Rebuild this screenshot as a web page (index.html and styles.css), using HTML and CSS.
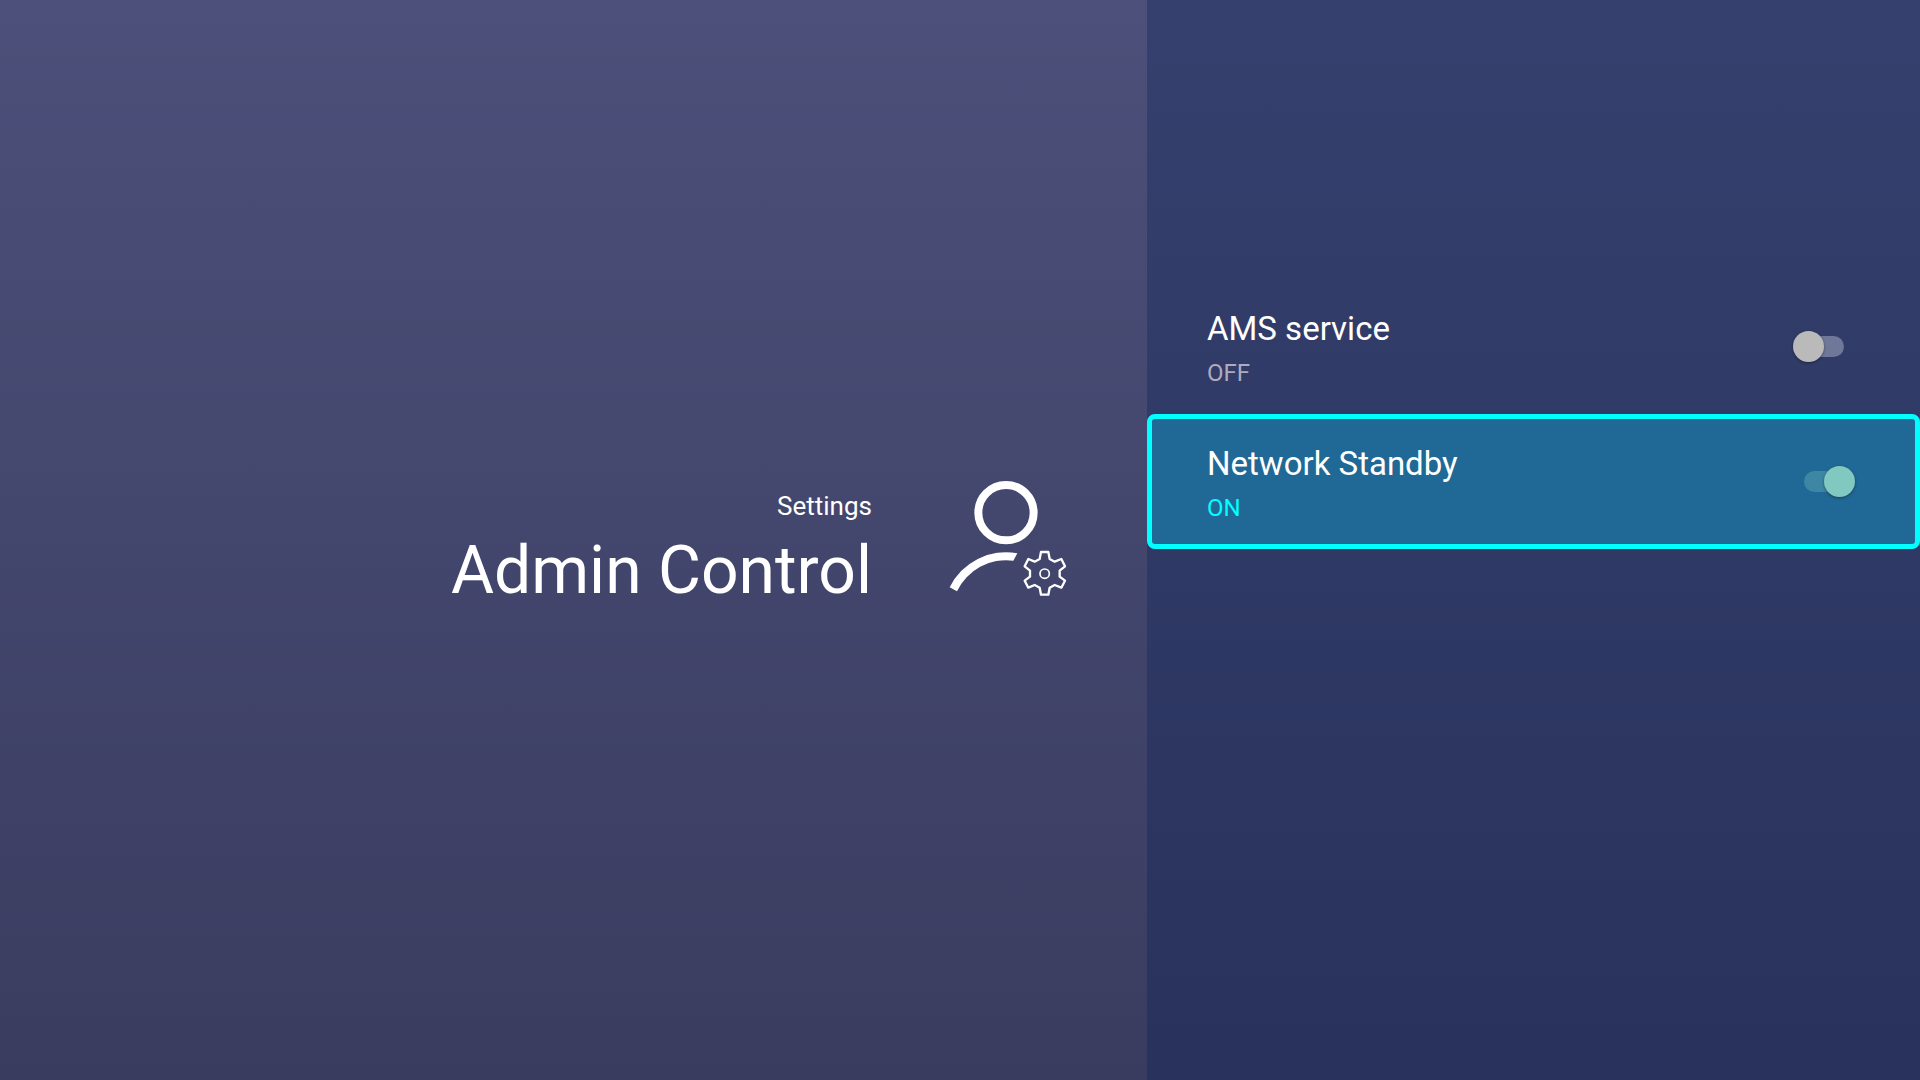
FILE: index.html
```html
<!DOCTYPE html>
<html lang="en">
<head>
  <meta charset="UTF-8" />
  <meta name="viewport" content="width=device-width, initial-scale=1.0"/>
  <title>Admin Control</title>
  <link rel="stylesheet" href="styles.css">
</head>
<body>
  <header class="title-panel">
    <div class="titles">
      <p class="breadcrumb">Settings</p>
      <h1>Admin Control</h1>
    </div>
    <!-- Admin Icon -->
    <svg class="admin-icon" viewBox="48 48 384 384" fill="none" aria-hidden="true">
      <circle cx="228" cy="158" r="83" stroke="white" stroke-width="24"/>
      <path d="M59 382A187 187 0 0 1 262 280L250 302A163 163 0 0 0 81 394Z" fill="white"/>
      <path d="M333 276H355L359 297L374 305L394 297L405 319L389 332V350L405 362L394 383L374 375L359 383L355 404H333L329 383L314 375L295 383L284 362L300 350V332L284 319L295 297L314 305L329 297Z" stroke="white" stroke-width="7" stroke-linejoin="round"/>
      <circle cx="344" cy="341" r="14" stroke="white" stroke-width="5"/>
    </svg>
  </header>

  <main class="options-panel">
    <label class="option" for="ams-service">
      <span class="option-text">
        <span class="option-name">AMS service</span>
        <span class="option-state">OFF</span>
      </span>
      <input class="switch" type="checkbox" role="switch" id="ams-service">
    </label>
    <label class="option selected" for="network-standby">
      <span class="option-text">
        <span class="option-name">Network Standby</span>
        <span class="option-state">ON</span>
      </span>
      <input class="switch" type="checkbox" role="switch" id="network-standby" checked>
    </label>
  </main>
</body>
</html>
```
FILE: styles.css
```css
* {
    margin: 0;
    padding: 0;
    box-sizing: border-box;
}

body {
    display: grid;
    grid-template-columns: 1147fr 773fr;
    min-height: 100vh;
    font-family: Roboto, sans-serif;
    color: white;
    background-color: #3a3c5f;
}

.title-panel {
    display: flex;
    align-items: center;
    justify-content: flex-end;
    gap: 74px;
    padding-right: 73px;
    background: linear-gradient(#4c507a, #3a3c5f);
}

.titles {
    text-align: right;
}

.breadcrumb {
    font-size: 26px;
    line-height: 62px;
}

h1 {
    font-size: 66px;
    font-weight: 400;
    line-height: 68px;
}

.admin-icon {
    width: 128px;
    height: 128px;
}

.options-panel {
    padding-top: 279px;
    background: linear-gradient(#36406e, #28325c);
}

.option {
    display: flex;
    align-items: center;
    justify-content: space-between;
    height: 135px;
    padding: 0 60px 0 55px;
    border: 5px solid transparent;
    border-radius: 8px;
    cursor: pointer;
}

.option.selected {
    border-color: #00ffff;
    background-color: #206996;
}

.option-text {
    display: flex;
    flex-direction: column;
}

.option-name {
    font-size: 33px;
    line-height: 52px;
}

.option-state {
    font-size: 24px;
    line-height: 36px;
    color: #b0aabf;
}

.selected .option-state {
    color: #00ffff;
}

.switch {
    appearance: none;
    -webkit-appearance: none;
    position: relative;
    width: 62px;
    height: 31px;
    outline: none;
    cursor: pointer;
}

/* track */
.switch::before {
    content: "";
    position: absolute;
    top: 5px;
    left: 11px;
    width: 40px;
    height: 21px;
    border-radius: 11px;
    background-color: #6f7898;
}

/* thumb */
.switch::after {
    content: "";
    position: absolute;
    top: 0;
    left: 0;
    width: 31px;
    height: 31px;
    border-radius: 50%;
    background-color: #bababa;
    box-shadow: 0 1px 3px rgba(0, 0, 0, 0.4);
}

.switch:checked::before {
    background-color: #3d86a4;
}

.switch:checked::after {
    left: 31px;
    background-color: #80c8c0;
}
```
